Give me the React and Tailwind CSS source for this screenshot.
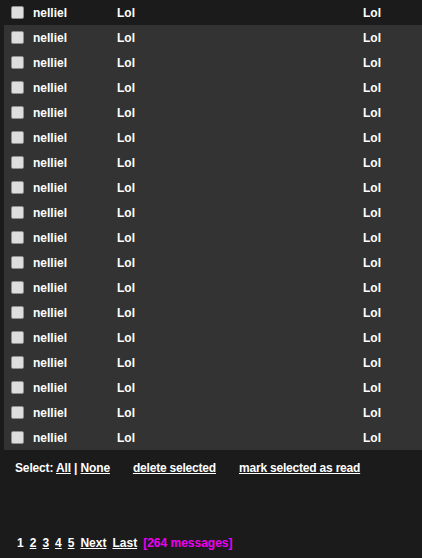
import React from 'react';

const rows = Array.from({ length: 18 }, (_, i) => ({ id: i, from: 'nelliel', subject: 'Lol', body: 'Lol' }));

function Box() {
  return <span className="block w-[13px] h-[13px] rounded-[2px] border border-[#8f8f8f] bg-[#dedede]" />;
}

function Row({ msg, first }) {
  return (
    <div
      className={
        first
          ? 'flex items-center h-[25px] pl-[11px]'
          : 'flex items-center h-[25px] pl-[7px] ml-[4px] bg-[#333333]'
      }
    >
      <div className="w-[22px]">
        <Box />
      </div>
      <div className="w-[84px]">{msg.from}</div>
      <div className="w-[246px]">{msg.subject}</div>
      <div>{msg.body}</div>
    </div>
  );
}

export default function App() {
  return (
    <div className="w-[422px] h-[558px] bg-[#1b1b1b] text-white font-bold text-[12px] overflow-hidden" style={{ fontFamily: '"Liberation Sans", Arial, sans-serif' }}>
      {rows.map((m, i) => (
        <Row key={m.id} msg={m} first={i === 0} />
      ))}

      <div className="flex items-center mt-[10px] pl-[15px] h-[16px]">
        <span className="tracking-[-0.15px]">
          Select: <a className="underline">All</a> | <a className="underline">None</a>
        </span>
        <a className="underline ml-[23px] tracking-[-0.2px]">delete selected</a>
        <a className="underline ml-[23px] tracking-[-0.2px]">mark selected as read</a>
      </div>

      <div className="flex items-center mt-[59px] pl-[17px] h-[16px] gap-[6px]">
        <span>1</span>
        <a className="underline">2</a>
        <a className="underline">3</a>
        <a className="underline">4</a>
        <a className="underline">5</a>
        <a className="underline">Next</a>
        <a className="underline">Last</a>
        <span className="text-[#ee00ee]">[264 messages]</span>
      </div>
    </div>
  );
}
